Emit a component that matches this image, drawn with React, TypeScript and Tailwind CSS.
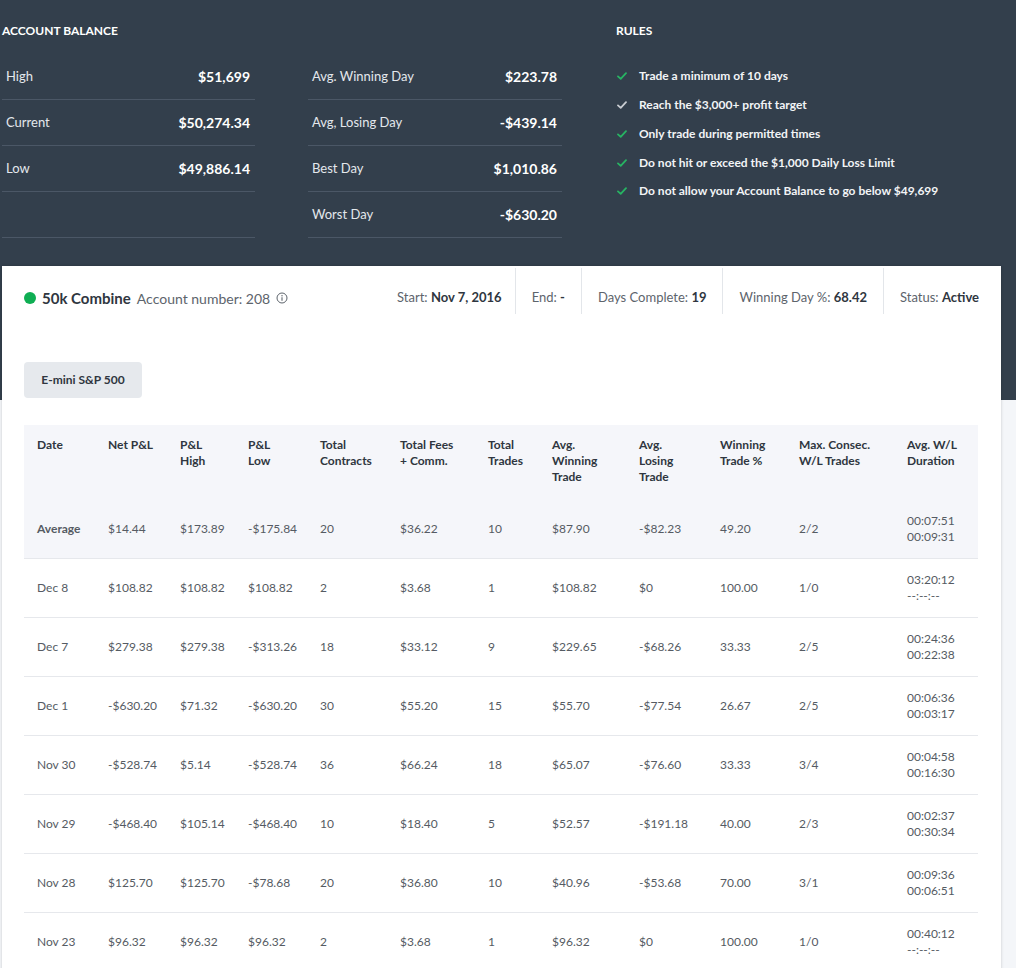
import React from "react";

type Row = {
  date: string;
  net: string;
  high: string;
  low: string;
  contracts: string;
  fees: string;
  trades: string;
  avgWin: string;
  avgLose: string;
  winPct: string;
  consec: string;
  dur: [string, string];
};

const rows: Row[] = [
  { date: "Dec 8", net: "$108.82", high: "$108.82", low: "$108.82", contracts: "2", fees: "$3.68", trades: "1", avgWin: "$108.82", avgLose: "$0", winPct: "100.00", consec: "1/0", dur: ["03:20:12", "--:--:--"] },
  { date: "Dec 7", net: "$279.38", high: "$279.38", low: "-$313.26", contracts: "18", fees: "$33.12", trades: "9", avgWin: "$229.65", avgLose: "-$68.26", winPct: "33.33", consec: "2/5", dur: ["00:24:36", "00:22:38"] },
  { date: "Dec 1", net: "-$630.20", high: "$71.32", low: "-$630.20", contracts: "30", fees: "$55.20", trades: "15", avgWin: "$55.70", avgLose: "-$77.54", winPct: "26.67", consec: "2/5", dur: ["00:06:36", "00:03:17"] },
  { date: "Nov 30", net: "-$528.74", high: "$5.14", low: "-$528.74", contracts: "36", fees: "$66.24", trades: "18", avgWin: "$65.07", avgLose: "-$76.60", winPct: "33.33", consec: "3/4", dur: ["00:04:58", "00:16:30"] },
  { date: "Nov 29", net: "-$468.40", high: "$105.14", low: "-$468.40", contracts: "10", fees: "$18.40", trades: "5", avgWin: "$52.57", avgLose: "-$191.18", winPct: "40.00", consec: "2/3", dur: ["00:02:37", "00:30:34"] },
  { date: "Nov 28", net: "$125.70", high: "$125.70", low: "-$78.68", contracts: "20", fees: "$36.80", trades: "10", avgWin: "$40.96", avgLose: "-$53.68", winPct: "70.00", consec: "3/1", dur: ["00:09:36", "00:06:51"] },
  { date: "Nov 23", net: "$96.32", high: "$96.32", low: "$96.32", contracts: "2", fees: "$3.68", trades: "1", avgWin: "$96.32", avgLose: "$0", winPct: "100.00", consec: "1/0", dur: ["00:40:12", "--:--:--"] },
];

const avg: Row = { date: "Average", net: "$14.44", high: "$173.89", low: "-$175.84", contracts: "20", fees: "$36.22", trades: "10", avgWin: "$87.90", avgLose: "-$82.23", winPct: "49.20", consec: "2/2", dur: ["00:07:51", "00:09:31"] };

const colWidths = [71, 72, 68, 72, 80, 88, 64, 87, 81, 79, 108, 84];

function Check({ green }: { green: boolean }) {
  return (
    <svg width="10" height="8" viewBox="0 0 10 8" className="shrink-0">
      <path d="M1 4.4 L3.7 6.8 L9 1.2" fill="none" stroke={green ? "#27b463" : "#c9cdd2"} strokeWidth="1.8" strokeLinecap="round" strokeLinejoin="round" />
    </svg>
  );
}

function StatRow({ label, value }: { label?: string; value?: string }) {
  return (
    <div className="flex h-[46px] items-center justify-between border-b border-[#4b5766] pl-[4px] pr-[5px]">
      <span className="text-[13px] text-[#e4e8ec]">{label}</span>
      <span className="text-[14px] font-bold text-white">{value}</span>
    </div>
  );
}

function Cells({ r, avgRow }: { r: Row; avgRow?: boolean }) {
  const td = "h-[59px] align-middle pl-[13px] border-b border-[#e6e8ec] text-[12px] text-[#555b63]";
  return (
    <tr className={avgRow ? "bg-[#f5f6fa]" : ""}>
      <td className={td + (avgRow ? " font-bold text-[#2f3640]" : "")}>{r.date}</td>
      <td className={td}>{r.net}</td>
      <td className={td}>{r.high}</td>
      <td className={td}>{r.low}</td>
      <td className={td}>{r.contracts}</td>
      <td className={td}>{r.fees}</td>
      <td className={td}>{r.trades}</td>
      <td className={td}>{r.avgWin}</td>
      <td className={td}>{r.avgLose}</td>
      <td className={td}>{r.winPct}</td>
      <td className={td}>{r.consec}</td>
      <td className={td + " leading-[16px]"}>
        <div>{r.dur[0]}</div>
        <div>{r.dur[1]}</div>
      </td>
    </tr>
  );
}

const headers: string[][] = [
  ["Date"],
  ["Net P&L"],
  ["P&L", "High"],
  ["P&L", "Low"],
  ["Total", "Contracts"],
  ["Total Fees", "+ Comm."],
  ["Total", "Trades"],
  ["Avg.", "Winning", "Trade"],
  ["Avg.", "Losing", "Trade"],
  ["Winning", "Trade %"],
  ["Max. Consec.", "W/L Trades"],
  ["Avg. W/L", "Duration"],
];

export default function App() {
  return (
    <div className="min-h-[968px] w-[1016px] bg-[#f4f6f9] font-['Lato','Noto_Sans',sans-serif]">
      {/* Dark header */}
      <div className="h-[400px] bg-[#333f4c] pl-[2px]">
        <div className="flex">
          <div className="w-[560px]">
            <div className="pt-[23px] text-[12px] font-bold uppercase leading-[16px] text-white">Account Balance</div>
            <div className="mt-[15px] flex gap-[53px]">
              <div className="w-[253px]">
                <StatRow label="High" value="$51,699" />
                <StatRow label="Current" value="$50,274.34" />
                <StatRow label="Low" value="$49,886.14" />
                <StatRow />
              </div>
              <div className="w-[254px]">
                <StatRow label="Avg. Winning Day" value="$223.78" />
                <StatRow label="Avg, Losing Day" value="-$439.14" />
                <StatRow label="Best Day" value="$1,010.86" />
                <StatRow label="Worst Day" value="-$630.20" />
              </div>
            </div>
          </div>
          <div className="ml-[54px]">
            <div className="pt-[23px] text-[12px] font-bold uppercase leading-[16px] text-white">Rules</div>
            <ul className="mt-[23px] pl-[1px]">
              {[
                ["Trade a minimum of 10 days", true],
                ["Reach the $3,000+ profit target", false],
                ["Only trade during permitted times", true],
                ["Do not hit or exceed the $1,000 Daily Loss Limit", true],
                ["Do not allow your Account Balance to go below $49,699", true],
              ].map(([t, g]) => (
                <li key={t as string} className="flex h-[28.75px] items-center gap-[12px] text-[12px] font-bold text-[#f2f4f6]">
                  <Check green={g as boolean} />
                  <span>{t as string}</span>
                </li>
              ))}
            </ul>
          </div>
        </div>
      </div>

      {/* Card */}
      <div className="relative -mt-[134px] ml-[2px] w-[999px] bg-white px-[22px] pt-[2px] pb-[20px] shadow-[0_0_3px_rgba(0,0,0,0.18)]">
        <div className="flex items-start justify-between">
          <div className="flex items-center pt-[19px]">
            <span className="mr-[6px] h-[12px] w-[12px] rounded-full bg-[#0fae53]" />
            <span className="text-[15px] font-bold text-[#2f3640]">50k Combine</span>
            <span className="ml-[6px] text-[14px] text-[#5d646c]">Account number: 208</span>
            <svg width="12" height="12" viewBox="0 0 12 12" className="ml-[6px]">
              <circle cx="6" cy="6" r="5" fill="none" stroke="#5d646c" strokeWidth="1" />
              <circle cx="6" cy="3.7" r="0.7" fill="#5d646c" />
              <path d="M6 5.3 V8.7" stroke="#5d646c" strokeWidth="1.1" />
            </svg>
          </div>
          <div className="flex text-[13px] text-[#5d646c]">
            <div className="h-[46px] pr-[13px] pt-[20px] leading-[18px]">
              Start: <span className="font-bold text-[#2f3640]">Nov 7, 2016</span>
            </div>
            <div className="h-[46px] border-l border-[#e3e6ea] px-[16px] pt-[20px] leading-[18px]">
              End: <span className="font-bold text-[#2f3640]">-</span>
            </div>
            <div className="h-[46px] border-l border-[#e3e6ea] px-[16px] pt-[20px] leading-[18px]">
              Days Complete: <span className="font-bold text-[#2f3640]">19</span>
            </div>
            <div className="h-[46px] border-l border-[#e3e6ea] px-[16px] pt-[20px] leading-[18px]">
              Winning Day %: <span className="font-bold text-[#2f3640]">68.42</span>
            </div>
            <div className="h-[46px] border-l border-[#e3e6ea] pl-[16px] pt-[20px] leading-[18px]">
              Status: <span className="font-bold text-[#2f3640]">Active</span>
            </div>
          </div>
        </div>

        <button className="mt-[48px] h-[36px] w-[118px] rounded-[4px] bg-[#e6e9ed] text-[12px] font-bold text-[#2f3640]">
          E-mini S&amp;P 500
        </button>

        <table className="mt-[27px] w-[954px] table-fixed border-separate border-spacing-0">
          <colgroup>
            {colWidths.map((w, i) => (
              <col key={i} style={{ width: w }} />
            ))}
          </colgroup>
          <thead>
            <tr className="bg-[#f5f6fa]">
              {headers.map((h, i) => (
                <th key={i} className="h-[75px] pl-[13px] pt-[12px] text-left align-top text-[12px] font-bold leading-[16px] text-[#2f3640]">
                  {h.map((l, j) => (
                    <div key={j}>{l}</div>
                  ))}
                </th>
              ))}
            </tr>
          </thead>
          <tbody>
            <Cells r={avg} avgRow />
            {rows.map((r) => (
              <Cells key={r.date} r={r} />
            ))}
          </tbody>
        </table>
      </div>
    </div>
  );
}
